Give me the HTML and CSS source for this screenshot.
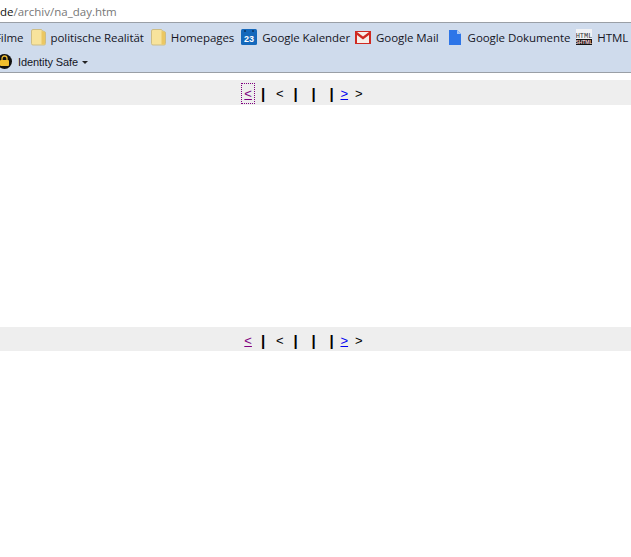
FILE: index.html
```html
<!DOCTYPE html>
<html lang="de">
<head>
<meta charset="utf-8">
<title>na_day</title>
<link rel="stylesheet" href="styles.css">
</head>
<body>
<div class="urlbar"><b class="host">de</b>/archiv/na_day.htm</div>
<div class="toolbar">
  <div class="bookmarks">
    <span class="bm bm-first">Filme</span>
    <span class="bm bm-wide"><svg class="ic" width="15" height="17" viewBox="0 0 15 17"><path d="M2 .5h8.500l1 1.500 2 .5q1 .3 1 1.500v10.500q0 1.500-1.500 1.500H2q-1.500 0-1.500-1.500V2q0-1.500 1.500-1.500z" fill="#f7e39c" stroke="#cdbd85"/><path d="M10.500 2l3.500 1v11.500q0 1-1 1h-2.500z" fill="#ebc763"/></svg>politische Realität</span>
    <span class="bm bm-wide"><svg class="ic" width="15" height="17" viewBox="0 0 15 17"><path d="M2 .5h8.500l1 1.500 2 .5q1 .3 1 1.500v10.500q0 1.500-1.500 1.500H2q-1.500 0-1.500-1.500V2q0-1.500 1.500-1.500z" fill="#f7e39c" stroke="#cdbd85"/><path d="M10.500 2l3.500 1v11.500q0 1-1 1h-2.500z" fill="#ebc763"/></svg>Homepages</span>
    <span class="bm bm-narrow"><svg class="ic ic-up" width="16" height="16" viewBox="0 0 16 16"><rect width="16" height="16" rx="1.500" fill="#1468bb"/><rect x="3" y="1" width="2" height="2" fill="#0b3f78"/><rect x="11" y="1" width="2" height="2" fill="#0b3f78"/><text x="8" y="13" class="cal-num">23</text></svg>Google Kalender</span>
    <span class="bm"><svg class="ic" width="16" height="13" viewBox="0 0 16 13"><rect width="16" height="13" fill="#cf2a22"/><path d="M2 1h12L8 5.500zM2 4l6 4.500L14 4v8H2z" fill="#f7efe9"/></svg>Google Mail</span>
    <span class="bm bm-doc"><svg class="ic ic-doc" width="12" height="15" viewBox="0 0 12 15"><path d="M0 0h8l4 4v11H0z" fill="#2d75e8"/><path d="M8 0l4 4H8z" fill="#a9c8f5"/></svg>Google Dokumente</span>
    <span class="bm"><svg class="ic ic-up" width="16" height="16" viewBox="0 0 16 16"><rect width="16" height="16" fill="#f1f2f5"/><rect y="10" width="16" height="6" fill="#111"/><text x="8" y="8.500" class="html-top">HTML</text><text x="8" y="15" class="html-sub">SHTML</text></svg>HTML</span>
  </div>
  <div class="identity">
    <svg class="lock" width="12" height="15" viewBox="0 0 12 15"><circle cx="4.500" cy="7.500" r="7.500" fill="#111"/><path d="M2 6V4.500a2.500 2.500 0 0 1 5 0V6" fill="none" stroke="#e9b82f" stroke-width="1.300"/><rect x="0" y="6" width="9" height="6" rx="1" fill="#f0be2e"/></svg>
    <span class="identity-label">Identity Safe</span>
    <span class="caret"></span>
  </div>
</div>
<div class="band band-top">
  <nav class="pager">
    <a href="#" class="prev visited focused">&lt;</a><span class="sep">|</span><span class="plain">&lt;</span><span class="sep">|</span><span class="sep wide">|</span><span class="sep wide sep-last">|</span><a href="#" class="next">&gt;</a><span class="plain last">&gt;</span>
  </nav>
</div>
<div class="band band-bottom">
  <nav class="pager">
    <a href="#" class="prev visited">&lt;</a><span class="sep">|</span><span class="plain">&lt;</span><span class="sep">|</span><span class="sep wide">|</span><span class="sep wide sep-last">|</span><a href="#" class="next">&gt;</a><span class="plain last">&gt;</span>
  </nav>
</div>
</body>
</html>
```

FILE: styles.css
```css
html, body {
  margin: 0;
  padding: 0;
  background: #fff;
  overflow: hidden;
}
body {
  width: 631px;
  height: 557px;
  font-family: "Open Sans", "Noto Sans", sans-serif;
}
.urlbar {
  height: 22px;
  line-height: 23px;
  font-size: 11.5px;
  color: #777;
  white-space: nowrap;
}
.host {
  font-weight: 400;
  color: #111;
}
.toolbar {
  height: 49px;
  background: #cfdbec;
  border-top: 1px solid #9a9fa6;
  border-bottom: 1px solid #9a9fa6;
  overflow: hidden;
}
.bookmarks {
  display: flex;
  height: 29px;
  align-items: center;
  margin-left: -5px;
  white-space: nowrap;
  font-size: 11.5px;
  letter-spacing: -0.07px;
  color: #15151f;
}
.bm {
  display: flex;
  align-items: center;
  margin-right: 6px;
  flex: none;
}
.bm-wide {
  margin-right: 7px;
}
.bm-narrow {
  margin-right: 5px;
}
.ic {
  margin-right: 5px;
  flex: none;
}
.ic-up {
  margin-top: -1px;
}
.ic-doc {
  margin-right: 7px;
}
.bm-doc {
  margin-left: 4px;
}
.bm-first {
  margin-right: 7px;
}
.cal-num {
  font: 700 9px "Liberation Sans", sans-serif;
  fill: #fff;
  text-anchor: middle;
}
.html-top {
  font: 7px "Liberation Mono", monospace;
  fill: #333;
  text-anchor: middle;
}
.html-sub {
  font: 700 5px "Liberation Sans", sans-serif;
  fill: #f4d0d0;
  text-anchor: middle;
}
.identity {
  display: flex;
  align-items: center;
  height: 19px;
  color: #15151f;
}
.lock {
  margin-right: 6px;
  flex: none;
}
.identity-label {
  font: 11px "Liberation Sans", Tahoma, sans-serif;
  letter-spacing: -0.08px;
}
.caret {
  width: 0;
  height: 0;
  margin: 2px 0 0 4px;
  border-left: 3px solid transparent;
  border-right: 3px solid transparent;
  border-top: 3px solid #222;
}
.band {
  height: 25px;
  background: #eee;
  display: flex;
  justify-content: center;
  align-items: center;
  font: 13px "Liberation Sans", Arial, sans-serif;
  color: #000;
}
.band-top {
  margin-top: 7px;
}
.band-bottom {
  margin-top: 222px;
  height: 24px;
}
.pager {
  display: flex;
  align-items: center;
  padding-right: 24px;
  padding-top: 2px;
}
.pager > * {
  margin-right: 8px;
}
.pager .prev {
  margin-right: 9px;
}
.pager .sep-last {
  margin-right: 7px;
}
.pager .last {
  margin-right: 0;
}
.visited {
  color: #800080;
}
.next {
  color: #00e;
  margin-right: 4px !important;
}
.focused {
  outline: 1px dotted #800080;
  outline-offset: 2px;
}
.sep {
  font-size: 15px;
  font-weight: 700;
  width: 4px;
}
.plain {
  margin-left: 3px;
}
.pager .plain:nth-child(3) {
  margin-right: 10px;
}
.wide {
  margin-left: 6px;
}
```
